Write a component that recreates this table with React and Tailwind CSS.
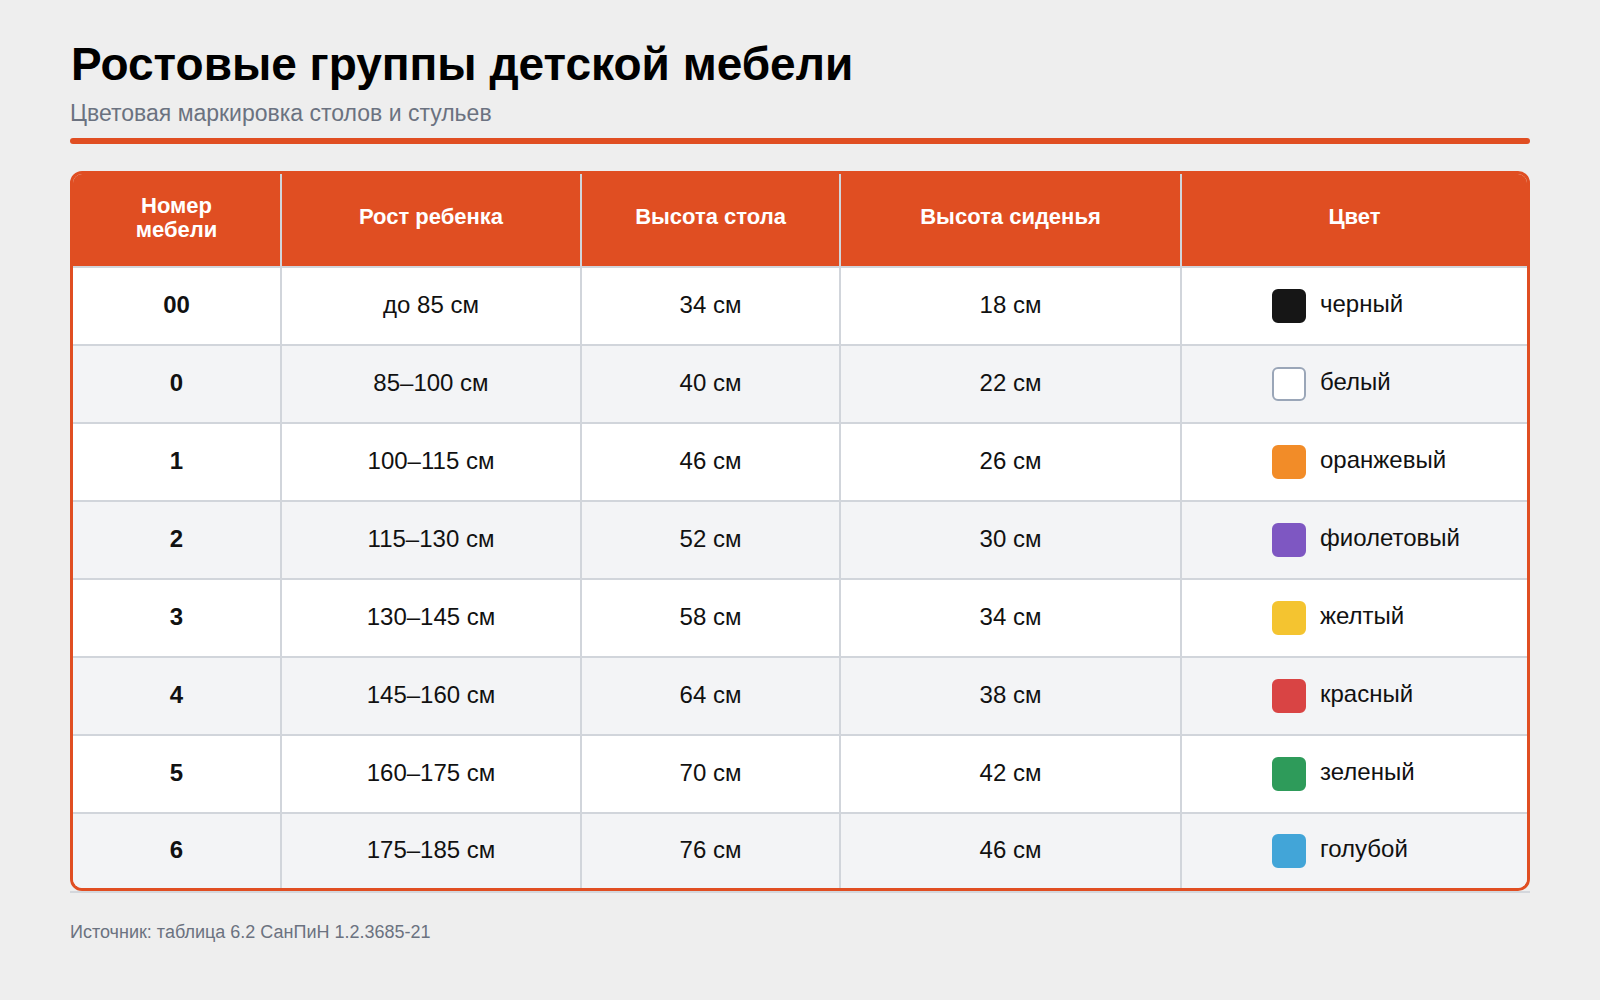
const rows = [
  { num: '00', height: 'до 85 см', table: '34 см', seat: '18 см', color: 'черный', swatch: 'bg-[#161616] border-[#161616]' },
  { num: '0', height: '85–100 см', table: '40 см', seat: '22 см', color: 'белый', swatch: 'bg-white border-[#9aa6b8]' },
  { num: '1', height: '100–115 см', table: '46 см', seat: '26 см', color: 'оранжевый', swatch: 'bg-[#f28c28] border-[#f28c28]' },
  { num: '2', height: '115–130 см', table: '52 см', seat: '30 см', color: 'фиолетовый', swatch: 'bg-[#7e57c2] border-[#7e57c2]' },
  { num: '3', height: '130–145 см', table: '58 см', seat: '34 см', color: 'желтый', swatch: 'bg-[#f4c430] border-[#f4c430]' },
  { num: '4', height: '145–160 см', table: '64 см', seat: '38 см', color: 'красный', swatch: 'bg-[#d94444] border-[#d94444]' },
  { num: '5', height: '160–175 см', table: '70 см', seat: '42 см', color: 'зеленый', swatch: 'bg-[#2e9b5a] border-[#2e9b5a]' },
  { num: '6', height: '175–185 см', table: '76 см', seat: '46 см', color: 'голубой', swatch: 'bg-[#42a5d8] border-[#42a5d8]' },
];

const cols = 'grid grid-cols-[209px_300px_259px_341px_1fr]';
const sep = 'border-r-2 border-[#d1d5db]';

export default function App() {
  return (
    <div className="min-h-screen bg-[#eeeeee] px-[70px] pt-[37px] font-['Liberation_Sans',Arial,sans-serif] text-[#111111]">
      {/* Heading */}
      <h1 className="pl-[1px] text-[46px] font-bold leading-[1.2] text-black">Ростовые группы детской мебели</h1>
      <p className="mt-[8px] text-[23px] leading-[1.2] text-[#6b7280]">Цветовая маркировка столов и стульев</p>
      <div className="mt-[10px] h-[6px] rounded-full bg-[#e04e22]" />

      {/* Table */}
      <div className="mt-[27px] border-b-2 border-[#d4d7dc]">
        <div className="overflow-hidden rounded-[12px] border-[3px] border-[#e04e22]">
          <div className={`${cols} h-[94px] border-b-2 border-[#d1d5db] bg-[#e04e22] text-[22px] font-bold leading-[1.1] text-white`}>
            <div className={`${sep} flex items-center justify-center pb-[3px] text-center`}>Номер<br />мебели</div>
            <div className={`${sep} flex items-center justify-center pb-[6px]`}>Рост ребенка</div>
            <div className={`${sep} flex items-center justify-center pb-[6px]`}>Высота стола</div>
            <div className={`${sep} flex items-center justify-center pb-[6px]`}>Высота сиденья</div>
            <div className="flex items-center justify-center pb-[6px]">Цвет</div>
          </div>

          {rows.map((r, i) => {
            const last = i === rows.length - 1;
            return (
              <div
                key={r.num}
                className={`${cols} text-[24px] ${last ? 'h-[74px]' : 'h-[78px] border-b-2 border-[#d1d5db]'} ${i % 2 ? 'bg-[#f3f4f6]' : 'bg-white'}`}
              >
                <div className={`${sep} flex items-center justify-center pb-[2px] font-bold`}>{r.num}</div>
                <div className={`${sep} flex items-center justify-center pb-[2px]`}>{r.height}</div>
                <div className={`${sep} flex items-center justify-center pb-[2px]`}>{r.table}</div>
                <div className={`${sep} flex items-center justify-center pb-[2px]`}>{r.seat}</div>
                <div className="flex items-center gap-[14px] pl-[90px]">
                  <span className={`h-[34px] w-[34px] rounded-[6px] border-2 ${r.swatch}`} />
                  <span className="pb-[3px]">{r.color}</span>
                </div>
              </div>
            );
          })}
        </div>
      </div>

      <p className="mt-[29px] text-[18px] leading-[1.2] text-[#6b7280]">Источник: таблица 6.2 СанПиН 1.2.3685-21</p>
    </div>
  );
}
